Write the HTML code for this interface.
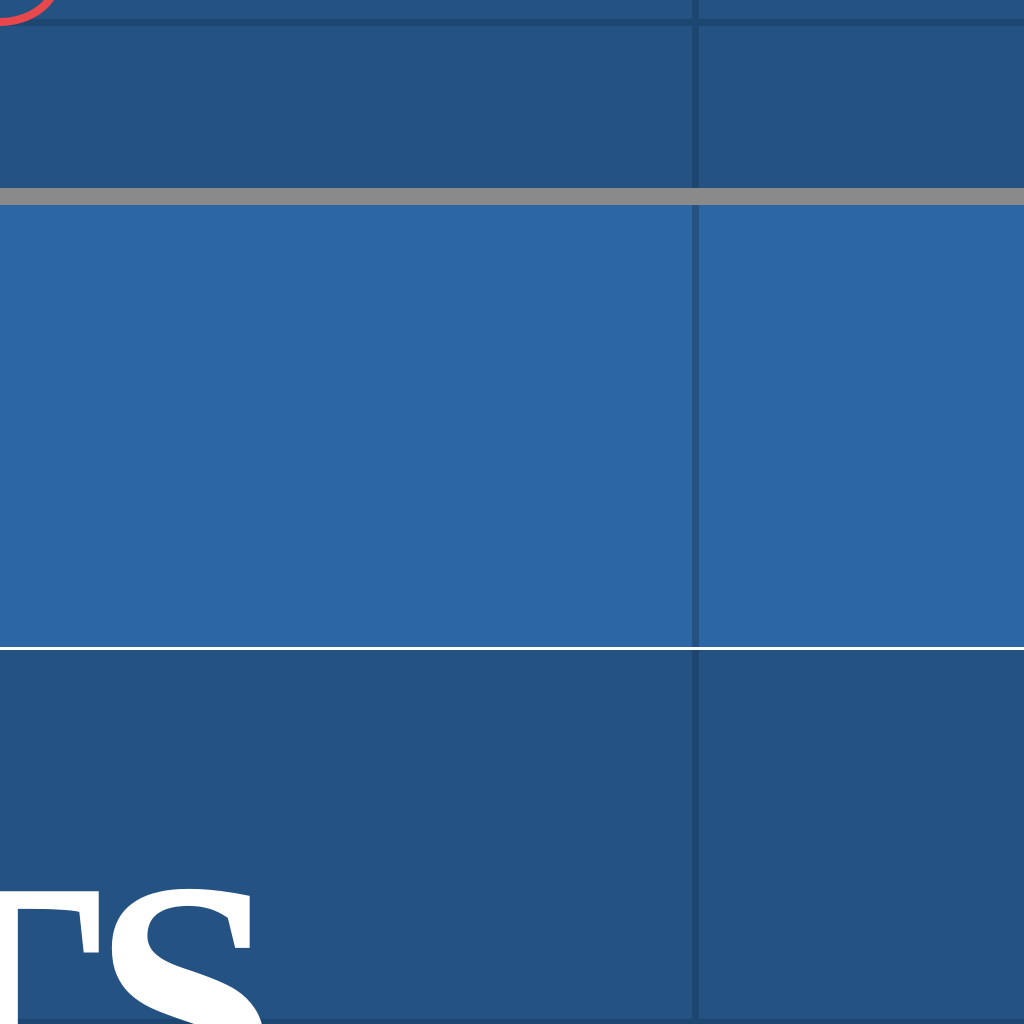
<!DOCTYPE html>
<html><head><style>
html,body{margin:0;padding:0;width:1024px;height:1024px;overflow:hidden;background:#245283;position:relative}
div{position:absolute}
#clip{left:0;top:0;width:1024px;height:1024px;overflow:hidden}
</style></head><body>
<div id="clip">
<div style="left:0;top:0;width:1024px;height:188px;background:#245283"></div>
<div style="left:0;top:19px;width:1024px;height:7px;background:#1d4670"></div>
<div style="left:0;top:188px;width:1024px;height:17px;background:#8a8a8a"></div>
<div style="left:0;top:205px;width:1024px;height:442px;background:#2c66a5"></div>
<div style="left:0;top:647px;width:1024px;height:3px;background:#ffffff"></div>
<div style="left:0;top:650px;width:1024px;height:374px;background:#245283"></div>
<div style="left:692px;top:0;width:7px;height:188px;background:#1d4670"></div>
<div style="left:692px;top:205px;width:7px;height:442px;background:#245283"></div>
<div style="left:692px;top:650px;width:7px;height:374px;background:#1d4670"></div>
<div style="left:0;top:1019px;width:1024px;height:5px;background:#1d4670"></div>
<svg style="position:absolute;left:0;top:0" width="120" height="40"><ellipse cx="0" cy="-25" rx="58" ry="47" fill="none" stroke="#e8474c" stroke-width="8"/></svg>
<div style="left:-119px;top:831px;height:193px;overflow:hidden;font-family:'Liberation Serif',serif;font-weight:700;font-size:334px;color:#fff;line-height:1;letter-spacing:-11px;white-space:nowrap">TS</div>
</div>
</body></html>
